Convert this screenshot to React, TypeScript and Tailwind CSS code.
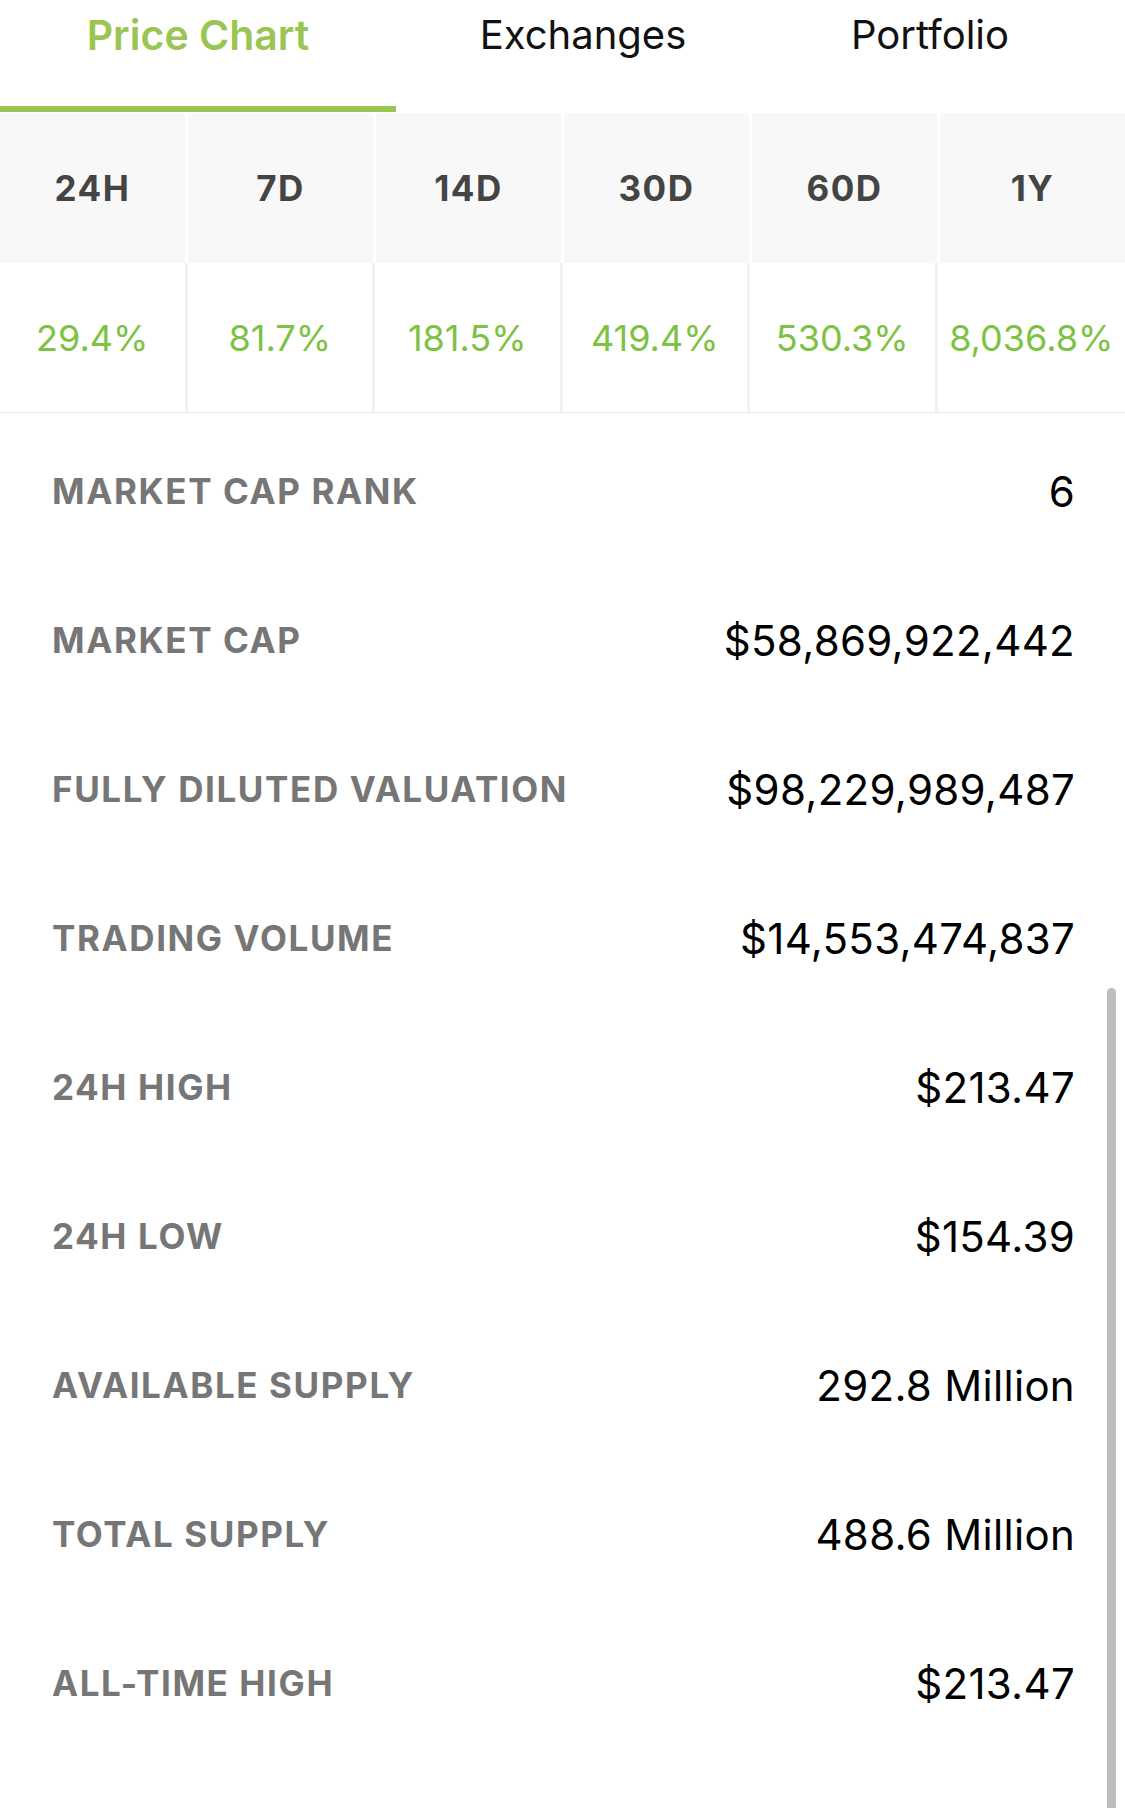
import React from "react";

const periods = [
  { label: "24H", value: "29.4%" },
  { label: "7D", value: "81.7%" },
  { label: "14D", value: "181.5%" },
  { label: "30D", value: "419.4%" },
  { label: "60D", value: "530.3%" },
  { label: "1Y", value: "8,036.8%" },
];

const stats = [
  { label: "MARKET CAP RANK", value: "6" },
  { label: "MARKET CAP", value: "$58,869,922,442" },
  { label: "FULLY DILUTED VALUATION", value: "$98,229,989,487" },
  { label: "TRADING VOLUME", value: "$14,553,474,837" },
  { label: "24H HIGH", value: "$213.47" },
  { label: "24H LOW", value: "$154.39" },
  { label: "AVAILABLE SUPPLY", value: "292.8 Million" },
  { label: "TOTAL SUPPLY", value: "488.6 Million" },
  { label: "ALL-TIME HIGH", value: "$213.47" },
];

export default function App() {
  return (
    <div
      className="relative w-[1125px] h-[1808px] overflow-hidden bg-white"
      style={{ fontFamily: "Inter, 'Noto Sans', sans-serif" }}
    >
      {/* tabs */}
      <div className="flex h-[112px]">
        <div className="w-[396px] flex flex-col">
          <div className="flex-1 flex justify-center pt-[10px] text-[41px] leading-[50px] font-semibold text-[#9bc553]">
            Price Chart
          </div>
          <div className="h-[6px] bg-[#9bc553]" />
        </div>
        <div className="w-[374px] flex justify-center pt-[10px] text-[40px] leading-[50px] text-[#111]">
          Exchanges
        </div>
        <div className="w-[320px] flex justify-center pt-[10px] text-[40px] leading-[50px] text-[#111]">
          Portfolio
        </div>
      </div>

      {/* period table */}
      <div className="grid grid-cols-6 gap-x-[3px] bg-white pt-[1px]">
        {periods.map((p) => (
          <div
            key={p.label}
            className="h-[150px] bg-[#f8f8f8] flex items-center justify-center text-[35px] font-bold text-[#444] tracking-[1.5px]"
          >
            {p.label}
          </div>
        ))}
      </div>
      <div className="grid grid-cols-6 border-b border-[#e8e8e8]">
        {periods.map((p, i) => (
          <div
            key={p.label}
            className={
              "h-[149px] flex items-center justify-center text-[36px] text-[#7dc243] " +
              (i < 5 ? "border-r-[3px] border-[#f1f1f1]" : "")
            }
          >
            {p.value}
          </div>
        ))}
      </div>

      {/* stats */}
      <div className="pt-[4px] pl-[52px] pr-[50px]">
        {stats.map((s) => (
          <div key={s.label} className="h-[149px] flex items-center justify-between">
            <span className="text-[35px] font-bold text-[#767676] tracking-[1.6px]">{s.label}</span>
            <span className="text-[42px] text-black tracking-[0.3px]">{s.value}</span>
          </div>
        ))}
      </div>

      {/* scrollbar */}
      <div className="absolute left-[1107px] top-[988px] w-[9px] h-[830px] rounded-full bg-[#bdbdbd]" />
    </div>
  );
}
